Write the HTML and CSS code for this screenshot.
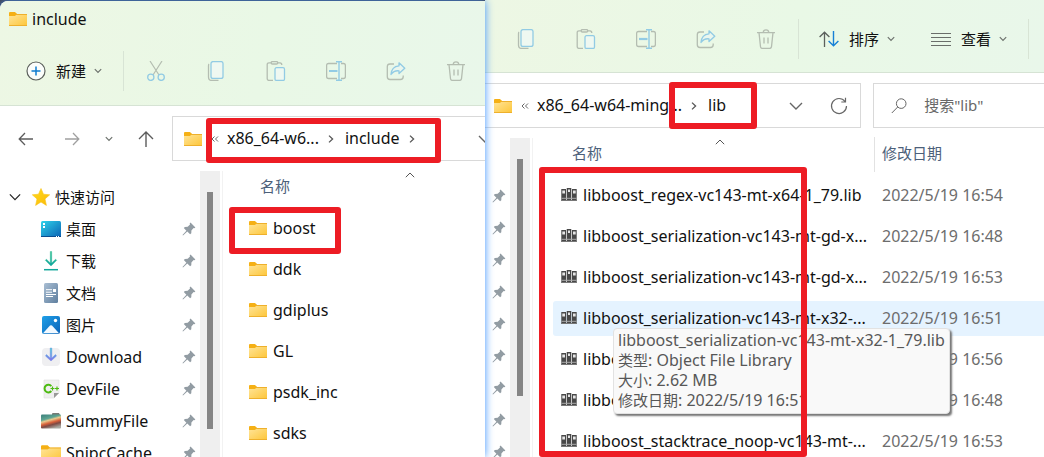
FILE: index.html
```
<!DOCTYPE html>
<html lang="zh-CN">
<head>
<meta charset="utf-8">
<meta name="viewport" content="width=device-width, initial-scale=1">
<title>include</title>
<link rel="stylesheet" href="styles.css">
</head>
<body>
<svg class="sprite" aria-hidden="true">
  <defs>
    <linearGradient id="gFolder" x1="0" y1="0" x2="1" y2="1"><stop offset="0" stop-color="#ffe59a"/><stop offset="1" stop-color="#fdc63a"/></linearGradient>
    <linearGradient id="gDesk" x1="0" y1="0" x2="1" y2="1"><stop offset="0" stop-color="#2fd3ea"/><stop offset="1" stop-color="#0b62b4"/></linearGradient>
    <linearGradient id="gDown" x1="0" y1="0" x2="0" y2="1"><stop offset="0" stop-color="#32c48d"/><stop offset="1" stop-color="#0fa3a0"/></linearGradient>
    <linearGradient id="gDoc" x1="0" y1="0" x2="1" y2="1"><stop offset="0" stop-color="#a9bed3"/><stop offset="1" stop-color="#5f7f9f"/></linearGradient>
    <linearGradient id="gPic" x1="0" y1="0" x2="1" y2="1"><stop offset="0" stop-color="#1fa0e8"/><stop offset="1" stop-color="#0a62b8"/></linearGradient>
    <linearGradient id="gDl" x1="0" y1="0" x2="0" y2="1"><stop offset="0" stop-color="#35d3cf"/><stop offset="1" stop-color="#8a6cf0"/></linearGradient>
    <linearGradient id="gSum" x1=".2" y1="0" x2=".6" y2="1"><stop offset="0" stop-color="#41857f"/><stop offset=".3" stop-color="#5fa592"/><stop offset=".42" stop-color="#e9c98d"/><stop offset=".6" stop-color="#d8603a"/><stop offset=".75" stop-color="#7d4a44"/><stop offset="1" stop-color="#a8a8a0"/></linearGradient>
    <linearGradient id="gStar" x1="0" y1="0" x2="1" y2="1"><stop offset="0" stop-color="#ffdc1a"/><stop offset="1" stop-color="#fbb80a"/></linearGradient>
  </defs>
  <symbol id="folder" viewBox="0 0 18 14"><path d="M0 1Q0 0 1 0H6L7.500 1.500H8V4H0Z" fill="#f5b015"/><path d="M0 4H6L8 2H17.500Q18 2 18 3V13.500H0Z" fill="url(#gFolder)"/><path d="M7 2.500H18M0 13.500H18" stroke="#eeb02c" fill="none"/></symbol>
  <symbol id="down" viewBox="0 0 8 6"><path d="M.8 1.200L4 4.400L7.200 1.200" fill="none" stroke="currentColor" stroke-width="1.200"/></symbol>
  <symbol id="bigdown" viewBox="0 0 14 8"><path d="M1 1L7 7L13 1" fill="none" stroke="currentColor" stroke-width="1.400"/></symbol>
  <symbol id="right" viewBox="0 0 6 8"><path d="M1 .6L4.600 4L1 7.400" fill="none" stroke="currentColor" stroke-width="1.300"/></symbol>
  <symbol id="more" viewBox="0 0 8 6"><path d="M3.500 .5L1 3L3.500 5.500M7 .5L4.500 3L7 5.500" fill="none" stroke="currentColor"/></symbol>
  <symbol id="caret" viewBox="0 0 10 6"><path d="M.8 5.200L5 1L9.200 5.200" fill="none" stroke="currentColor"/></symbol>
  <symbol id="plus" viewBox="0 0 20 20"><circle cx="10" cy="10" r="9" fill="#fbfdfb" stroke="#5c605c" stroke-width="1.200"/><path d="M10 5.500V14.500M5.500 10H14.500" stroke="#0f7bd0" stroke-width="1.500"/></symbol>
  <symbol id="cut" viewBox="0 0 20 20"><path d="M4 0L13 14M16 0L7 14" stroke="#b4bdb1" stroke-width="1.200"/><g fill="none" stroke="#92cbe4" stroke-width="1.300"><circle cx="4.800" cy="16.300" r="3.100"/><circle cx="15.200" cy="16.300" r="3.100"/></g></symbol>
  <symbol id="copy" viewBox="0 0 20 20"><path d="M3 3Q2.500 3.500 2.500 5V16Q2.500 19.500 6 19.500H12.500" fill="none" stroke="#b4bdb1" stroke-width="1.300"/><rect x="5" y=".6" width="12" height="16.800" rx="2" fill="#eff8f1" stroke="#92cbe4" stroke-width="1.300"/></symbol>
  <symbol id="paste" viewBox="0 0 20 20"><g fill="none" stroke="#b4bdb1" stroke-width="1.300"><path d="M7 19.400H3Q1.200 19.400 1.200 17.500V3.500Q1.200 1.800 3 1.800H5M12 1.800H14Q15.800 1.800 15.800 4"/><rect x="5.200" y=".6" width="6.500" height="2.400" rx="1.200"/></g><rect x="9" y="6.700" width="9.500" height="12.700" rx="1.500" fill="#eff8f1" stroke="#92cbe4" stroke-width="1.300"/></symbol>
  <symbol id="rename" viewBox="0 0 20 20"><path d="M11 2.500H2.500Q.6 2.500 .6 4.500V15.500Q.6 17.500 2.500 17.500H11M15 2.500H17.500Q19.400 2.500 19.400 4.500V15.500Q19.400 17.500 17.500 17.500H15" fill="none" stroke="#b4bdb1" stroke-width="1.300"/><path d="M3 10H11.500" stroke="#92cbe4" stroke-width="2.200"/><path d="M13 .8V19.200M10 .7H16M10 19.300H16" stroke="#92cbe4" stroke-width="1.400"/></symbol>
  <symbol id="share" viewBox="0 0 20 20"><path d="M8 3H4Q1.300 3 1.300 5.700V15.800Q1.300 18.500 4 18.500H14.500Q17.200 18.500 17.200 15.800V14.500" fill="none" stroke="#b4bdb1" stroke-width="1.300"/><path d="M13 1.800L18.800 7.200L13 12.600V9.800Q8 9.200 5 13.500Q5.500 5.500 13 4.800Z" fill="#eaf6ee" stroke="#92cbe4" stroke-width="1.300" stroke-linejoin="round"/></symbol>
  <symbol id="trash" viewBox="0 0 20 20"><g fill="none" stroke="#b4bdb1" stroke-width="1.300"><path d="M1 3.600H19M3 3.600L4.500 17.700Q4.700 19.400 6.300 19.400H13.700Q15.300 19.400 15.500 17.700L17 3.600M7.200 3.500Q7.400 .8 10 .8Q12.600 .8 12.800 3.500M8 8.500V14.500M12 8.500V14.500"/></g></symbol>
  <symbol id="sort" viewBox="0 0 20 16"><path d="M5.500 16V1.500M.6 6L5.500 1.200L10.400 6" fill="none" stroke="#5c605c" stroke-width="1.300"/><path d="M14.500 0V14.500M9.600 10L14.500 14.800L19.400 10" fill="none" stroke="#1680d6" stroke-width="1.400"/></symbol>
  <symbol id="lines" viewBox="0 0 20 14"><path d="M0 1.500H20M0 5.500H20M0 9.500H20M0 13.500H20" stroke="#6a6e6a"/></symbol>
  <symbol id="back" viewBox="0 0 16 14"><path d="M15 7H1.500M7 1L1.200 7L7 13" fill="none" stroke="currentColor" stroke-width="1.300"/></symbol>
  <symbol id="fwd" viewBox="0 0 16 14"><path d="M1 7H14.500M9 1L14.800 7L9 13" fill="none" stroke="currentColor" stroke-width="1.300"/></symbol>
  <symbol id="up" viewBox="0 0 16 16"><path d="M8 16V1.500M1 8L8 1L15 8" fill="none" stroke="currentColor" stroke-width="1.400"/></symbol>
  <symbol id="refresh" viewBox="0 0 18 18"><path d="M15 4.500A7.500 7.500 0 1 0 16.500 9M15.500 .8V5H11.300" fill="none" stroke="currentColor" stroke-width="1.200"/></symbol>
  <symbol id="find" viewBox="0 0 16 16"><circle cx="10.200" cy="5.600" r="4.800" fill="none" stroke="currentColor"/><path d="M6.700 9L.8 15" stroke="currentColor"/></symbol>
  <symbol id="pin" viewBox="0 0 14 14"><path d="M8.500 .6L13.400 5.400L12.300 6.300L11.600 6L9.400 8.500L9.300 11.200L8.100 12.200L5.300 9.600L1 13.600L.5 13.100L4.400 8.700L1.800 6L2.900 4.900L5.700 4.800L8 2.400L7.700 1.500Z" fill="#929ca3"/></symbol>
  <symbol id="star" viewBox="0 0 18 18"><path d="M9 .5L11.500 6.200L17.700 6.800L13 10.900L14.400 17.400L9 14L3.600 17.400L5 10.900L.3 6.800L6.500 6.200Z" fill="url(#gStar)" stroke="#f8c21a" stroke-width=".6"/></symbol>
  <symbol id="desk" viewBox="0 0 20 20"><rect y="2" width="20" height="16" rx="1.500" fill="url(#gDesk)"/><path d="M2 4H4V6H2ZM2 7H4V9H2Z" fill="#fff"/><path d="M0 17.500H20" stroke="#0a4d8f"/><path d="M15 17.500H16M17 17.500H18" stroke="#fff"/></symbol>
  <symbol id="dl" viewBox="0 0 20 20"><path d="M9.300 .5H10.700V12L14.600 8.200L15.700 9.300L10 15L4.300 9.300L5.400 8.200L9.300 12Z" fill="url(#gDown)" stroke="#20b495" stroke-width=".4"/><path d="M3 18.700H17" stroke="#12a79b" stroke-width="1.500"/></symbol>
  <symbol id="doc" viewBox="0 0 20 20"><rect x="3" width="14" height="20" rx="1.500" fill="url(#gDoc)"/><path d="M5 6.700H11M5 9.200H11M5 11.500H15M5 13.500H12" stroke="#fff"/><path d="M12 6H15V9H12Z" fill="#fff"/></symbol>
  <symbol id="pic" viewBox="0 0 20 20"><rect x="1" y="1" width="18" height="18" rx="2" fill="url(#gPic)"/><path d="M2 18.300L9 10.600Q10 9.800 11 10.600L18 18.300Z" fill="#f2f9ff"/><circle cx="14.500" cy="5.500" r="1.700" fill="#fff"/></symbol>
  <symbol id="load" viewBox="0 0 20 20"><rect x="1" y="1" width="18" height="18" rx="4" fill="#efeff1"/><path d="M9.200 1H10.800V11L14.500 7.500L15.500 9L10 14L4.500 9L5.500 7.500L9.200 11Z" fill="url(#gDl)" stroke="#7798e6" stroke-width=".5"/></symbol>
  <symbol id="cpp" viewBox="0 0 20 20"><path d="M3 1H18V14L13 19H3Z" fill="#efefef" stroke="#ddd" stroke-width=".6"/><path d="M18 14L13 19V14Z" fill="#999"/><path d="M10.300 7.200A3.800 3.800 0 1 0 10.300 12" fill="none" stroke="#4dbb12" stroke-width="2"/><path d="M9.500 9.500H13.500M11.500 7.500V11.500M14 9.500H18M16 7.500V11.500" stroke="#4dbb12" stroke-width="1.200"/></symbol>
  <symbol id="summy" viewBox="0 0 20 20"><path d="M11 3Q11 2 12 2H18L19 4H11Z" fill="#777b76"/><rect y="3.500" width="20" height="14" rx="1" fill="url(#gSum)"/></symbol>
  <symbol id="lib" viewBox="0 0 16 14"><path d="M.3 1H5V13H.3ZM5.700 0H10.300V13H5.700ZM11 1H15.700V13H11Z" fill="#484848"/><path d="M1.300 2.500H4V5.500H1.300ZM7 1.500H9V4H7ZM12 2.500H14.700V5.500H12Z" fill="#e6e6e6"/><path d="M.5 10.300H15.500" stroke="#aaa"/><path d="M.5 12.500H15.500" stroke="#777"/></symbol>
</svg>

<main class="desktop">
  <section class="window window-left" aria-label="include">
    <header class="chrome">
      <div class="titlebar"><svg class="i-folder"><use href="#folder"/></svg><span>include</span></div>
      <div class="toolbar">
        <button class="cmd cmd-new"><svg class="i20"><use href="#plus"/></svg>新建<svg class="i-down"><use href="#down"/></svg></button>
        <span class="rule"></span>
        <div class="tools">
          <button class="tool" aria-label="剪切"><svg class="i20"><use href="#cut"/></svg></button>
          <button class="tool" aria-label="复制"><svg class="i20"><use href="#copy"/></svg></button>
          <button class="tool" aria-label="粘贴"><svg class="i20"><use href="#paste"/></svg></button>
          <button class="tool" aria-label="重命名"><svg class="i20"><use href="#rename"/></svg></button>
          <button class="tool" aria-label="共享"><svg class="i20"><use href="#share"/></svg></button>
          <button class="tool" aria-label="删除"><svg class="i20"><use href="#trash"/></svg></button>
        </div>
      </div>
    </header>
    <nav class="navrow">
      <button class="nav" aria-label="后退"><svg class="i-arrow"><use href="#back"/></svg></button>
      <button class="nav off" aria-label="前进"><svg class="i-arrow"><use href="#fwd"/></svg></button>
      <button class="nav nav-small" aria-label="最近"><svg class="i-down"><use href="#down"/></svg></button>
      <button class="nav" aria-label="上一级"><svg class="i16"><use href="#up"/></svg></button>
      <div class="address">
        <svg class="i-folder"><use href="#folder"/></svg><svg class="i-more"><use href="#more"/></svg>
        <a href="#">x86_64-w6...</a><svg class="i-right"><use href="#right"/></svg>
        <a href="#">include</a><svg class="i-right"><use href="#right"/></svg>
        <button class="drop" aria-label="历史"><svg class="i-bigdown"><use href="#bigdown"/></svg></button>
      </div>
    </nav>
    <div class="content">
      <aside class="side">
        <div class="item root"><svg class="i-bigdown open"><use href="#bigdown"/></svg><svg class="i18"><use href="#star"/></svg><span class="zh">快速访问</span></div>
        <div class="item"><svg class="i20"><use href="#desk"/></svg><span class="zh">桌面</span><svg class="pin"><use href="#pin"/></svg></div>
        <div class="item"><svg class="i20"><use href="#dl"/></svg><span class="zh">下载</span><svg class="pin"><use href="#pin"/></svg></div>
        <div class="item"><svg class="i20"><use href="#doc"/></svg><span class="zh">文档</span><svg class="pin"><use href="#pin"/></svg></div>
        <div class="item"><svg class="i20"><use href="#pic"/></svg><span class="zh">图片</span><svg class="pin"><use href="#pin"/></svg></div>
        <div class="item"><svg class="i20"><use href="#load"/></svg><span>Download</span><svg class="pin"><use href="#pin"/></svg></div>
        <div class="item"><svg class="i20"><use href="#cpp"/></svg><span>DevFile</span><svg class="pin"><use href="#pin"/></svg></div>
        <div class="item"><svg class="i20"><use href="#summy"/></svg><span>SummyFile</span><svg class="pin"><use href="#pin"/></svg></div>
        <div class="item"><svg class="i20"><use href="#folder"/></svg><span>SnipcCache</span><svg class="pin"><use href="#pin"/></svg></div>
      </aside>
      <div class="scroll"><div class="thumb"></div></div>
      <div class="list">
        <svg class="i-caret"><use href="#caret"/></svg>
        <table class="files">
          <thead><tr><th>名称</th></tr></thead>
          <tbody>
            <tr><td><svg class="i-folder"><use href="#folder"/></svg>boost</td></tr>
            <tr><td><svg class="i-folder"><use href="#folder"/></svg>ddk</td></tr>
            <tr><td><svg class="i-folder"><use href="#folder"/></svg>gdiplus</td></tr>
            <tr><td><svg class="i-folder"><use href="#folder"/></svg>GL</td></tr>
            <tr><td><svg class="i-folder"><use href="#folder"/></svg>psdk_inc</td></tr>
            <tr><td><svg class="i-folder"><use href="#folder"/></svg>sdks</td></tr>
          </tbody>
        </table>
      </div>
    </div>
    <div class="mark mark-path"></div>
    <div class="mark mark-boost"></div>
  </section>

  <section class="window window-right" aria-label="lib">
    <header class="chrome">
      <div class="toolbar">
        <div class="tools">
          <button class="tool" aria-label="复制"><svg class="i20"><use href="#copy"/></svg></button>
          <button class="tool" aria-label="粘贴"><svg class="i20"><use href="#paste"/></svg></button>
          <button class="tool" aria-label="重命名"><svg class="i20"><use href="#rename"/></svg></button>
          <button class="tool" aria-label="共享"><svg class="i20"><use href="#share"/></svg></button>
          <button class="tool" aria-label="删除"><svg class="i20"><use href="#trash"/></svg></button>
        </div>
        <span class="rule"></span>
        <button class="cmd"><svg class="i-sort"><use href="#sort"/></svg>排序<svg class="i-down"><use href="#down"/></svg></button>
        <button class="cmd"><svg class="i-lines"><use href="#lines"/></svg>查看<svg class="i-down"><use href="#down"/></svg></button>
        <span class="rule"></span>
      </div>
    </header>
    <nav class="navrow">
      <div class="address">
        <svg class="i-folder"><use href="#folder"/></svg><svg class="i-more"><use href="#more"/></svg>
        <a href="#">x86_64-w64-ming...</a><svg class="i-right"><use href="#right"/></svg>
        <a href="#">lib</a>
        <button class="drop" aria-label="历史"><svg class="i-bigdown"><use href="#bigdown"/></svg></button>
        <button class="drop" aria-label="刷新"><svg class="i18"><use href="#refresh"/></svg></button>
      </div>
      <label class="search"><svg class="i16"><use href="#find"/></svg><input type="text" aria-label="搜索" placeholder='搜索"lib"'></label>
    </nav>
    <div class="content">
      <aside class="side">
        <div class="item"><svg class="pin"><use href="#pin"/></svg></div>
        <div class="item"><svg class="pin"><use href="#pin"/></svg></div>
        <div class="item"><svg class="pin"><use href="#pin"/></svg></div>
        <div class="item"><svg class="pin"><use href="#pin"/></svg></div>
        <div class="item"><svg class="pin"><use href="#pin"/></svg></div>
        <div class="item"><svg class="pin"><use href="#pin"/></svg></div>
        <div class="item"><svg class="pin"><use href="#pin"/></svg></div>
        <div class="item"><svg class="pin"><use href="#pin"/></svg></div>
        <div class="item"><svg class="pin"><use href="#pin"/></svg></div>
      </aside>
      <div class="scroll"><div class="thumb"></div></div>
      <div class="list">
        <svg class="i-caret"><use href="#caret"/></svg>
        <table class="files">
          <colgroup><col class="col-name"><col></colgroup>
          <thead><tr><th>名称</th><th>修改日期</th></tr></thead>
          <tbody>
            <tr><td><svg class="i-lib"><use href="#lib"/></svg>libboost_regex-vc143-mt-x64-1_79.lib</td><td>2022/5/19 16:54</td></tr>
            <tr><td><svg class="i-lib"><use href="#lib"/></svg>libboost_serialization-vc143-mt-gd-x...</td><td>2022/5/19 16:48</td></tr>
            <tr><td><svg class="i-lib"><use href="#lib"/></svg>libboost_serialization-vc143-mt-gd-x...</td><td>2022/5/19 16:53</td></tr>
            <tr class="hover"><td><svg class="i-lib"><use href="#lib"/></svg>libboost_serialization-vc143-mt-x32-...</td><td>2022/5/19 16:51</td></tr>
            <tr><td><svg class="i-lib"><use href="#lib"/></svg>libbo</td><td>2022/5/19 16:56</td></tr>
            <tr><td><svg class="i-lib"><use href="#lib"/></svg>libbo</td><td>2022/5/19 16:48</td></tr>
            <tr><td><svg class="i-lib"><use href="#lib"/></svg>libboost_stacktrace_noop-vc143-mt-...</td><td>2022/5/19 16:53</td></tr>
          </tbody>
        </table>
      </div>
    </div>
    <div class="tip" role="tooltip">
      <div>libboost_serialization-vc143-mt-x32-1_79.lib</div>
      <div><span class="zh">类型</span>: Object File Library</div>
      <div><span class="zh">大小</span>: 2.62 MB</div>
      <div><span class="zh">修改日期</span>: 2022/5/19 16:51</div>
    </div>
    <div class="mark mark-lib"></div>
    <div class="mark mark-files"></div>
  </section>
</main>
</body>
</html>
```

FILE: styles.css
```
* { box-sizing: border-box; }
body {
  margin: 0;
  background: #433f45;
  color: #111;
  font: 16px/20px "Noto Sans", "Noto Sans CJK SC", sans-serif;
}
button {
  border: 0;
  padding: 0;
  background: none;
  color: inherit;
  font: inherit;
}
a { color: inherit; text-decoration: none; }
svg { display: block; flex: none; }
.sprite { position: absolute; width: 0; height: 0; }
.zh { font-size: 15px; }

.i16 { width: 16px; height: 16px; }
.i18 { width: 18px; height: 18px; }
.i20 { width: 20px; height: 20px; }
.i-folder { width: 18px; height: 14px; }
.i-down { width: 8px; height: 6px; color: #6d726d; }
.i-bigdown { width: 14px; height: 8px; }
.i-right { width: 6px; height: 8px; color: #555; }
.i-more { width: 8px; height: 6px; color: #666; }
.i-arrow { width: 16px; height: 14px; }
.i-sort { width: 20px; height: 16px; }
.i-lines { width: 20px; height: 14px; }
.i-lib { width: 16px; height: 14px; }
.pin { width: 14px; height: 14px; margin-left: auto; }

.desktop {
  display: grid;
  grid-template-columns: 485fr 559fr;
  height: 100vh;
  overflow: hidden;
}
.window {
  position: relative;
  display: flex;
  flex-direction: column;
  min-width: 0;
  min-height: 0;
  background: #fff;
}
.window-left {
  z-index: 1;
  margin-top: 1px;
  border-top-left-radius: 8px;
  box-shadow: 0 0 8px #3b92ff;
}
.chrome {
  overflow: hidden;
  border-bottom: 1px solid #d6e3d4;
  background: linear-gradient(100deg, #edf7e4, #e9f8e6 55%, #e9f7ea);
}
.window-left .chrome { border-top-left-radius: 8px; }
.titlebar {
  display: flex;
  align-items: center;
  gap: 5px;
  height: 36px;
  padding-left: 9px;
}
.toolbar { display: flex; align-items: center; height: 67px; }
.window-left .toolbar { height: 68px; }
.window-right .toolbar { height: 72px; padding: 6px 0 0 21px; }
.cmd {
  display: flex;
  flex: none;
  align-items: center;
  gap: 10px;
  height: 40px;
  font-size: 15px;
  white-space: nowrap;
}
.cmd .i-down { margin-left: -2px; }
.cmd-new { padding-left: 26px; }
.rule { flex: none; width: 1px; height: 40px; background: #d8e4d5; }
.cmd-new + .rule { margin-left: 21px; }
.tools { display: flex; flex: none; gap: 20px; padding: 0 12px; }
.window-right .tools { padding-left: 0; }
.tool { display: grid; flex: none; place-items: center; width: 40px; height: 40px; }
.window-right .cmd { margin-left: 20px; }
.window-right .cmd + .cmd { margin-left: 36px; }
.window-right .cmd + .rule { margin-left: 21px; }

.navrow { display: flex; align-items: center; gap: 12px; padding-top: 10px; }
.window-left .navrow { gap: 0; padding-left: 3px; }
.nav { display: grid; place-items: center; width: 46px; height: 44px; color: #5c5c5c; }
.nav-small { width: 28px; }
.off { color: #a0a0a0; }
.address {
  display: flex;
  flex: 1;
  align-items: center;
  min-width: 0;
  height: 45px;
  border: 1px solid #d9d9d9;
  padding-left: 9px;
  overflow: hidden;
  white-space: nowrap;
}
.window-left .address { border-right: 0; margin-left: 3px; padding-left: 11px; }
.address a { padding-bottom: 1px; }
.address .i-more { margin: 0 8px 0 9px; }
.address .i-right { margin: 0 11px 0 9px; }
.drop { display: grid; flex: none; place-items: center; width: 43px; height: 43px; color: #666; }
.address a + .drop, .address .i-right + .drop { margin-left: auto; }
.window-left .drop { width: 14px; margin-right: -7px; }
.window-right .address { flex: none; width: 67.3%; border-left: 0; }
.search {
  display: flex;
  flex: 1;
  align-items: center;
  gap: 17px;
  min-width: 0;
  height: 45px;
  border: 1px solid #d9d9d9;
  border-right: 0;
  padding-left: 17px;
  color: #666;
}
.search input { width: 100%; min-width: 0; border: 0; padding: 0 0 2px; outline: 0; background: none; font: inherit; font-size: 15px; }
.search input::placeholder { color: #686868; opacity: 1; }

.content { display: flex; flex: 1; min-height: 0; padding-top: 10px; overflow: hidden; }
.side { flex: none; width: 200px; padding-top: 10px; }
.window-right .side { width: 25px; padding-top: 42px; }
.item { display: flex; align-items: center; gap: 5px; height: 32px; padding: 0 4px 0 41px; }
.window-right .item { padding: 0 4px 0 0; }
.root { padding-left: 9px; }
.open { width: 12px; margin-right: 6px; color: #222; }
.scroll { flex: none; width: 20px; padding: 21px 7px 0; background: #efefef; }
.thumb { width: 6px; height: 237px; background: #858585; }
.list { position: relative; flex: 1; min-width: 0; margin-left: 2px; border-left: 1px solid #f2f2f2; padding-left: 18px; }
.window-right .list { padding-left: 20px; }
.i-caret { position: absolute; top: 1px; left: 182px; width: 10px; height: 6px; color: #555; }
.files { width: 100%; margin-top: -7px; border-spacing: 0 6px; table-layout: fixed; }
.col-name { width: 321px; }
.files th { height: 35px; padding: 0 0 3px 19px; color: #4c607a; font-size: 15px; font-weight: 400; text-align: left; }
.files th + th { border-left: 1px solid #e2e2e2; padding-left: 7px; }
.files td { height: 35px; padding: 0 0 1px 8px; overflow: hidden; white-space: nowrap; }
.files td + td { color: #6d6d6d; }
.files td svg { display: inline-block; margin-right: 6px; vertical-align: -1px; }
.hover td { background: #e5f3ff; }
.hover td:first-child { border-radius: 3px 0 0 3px; }

.tip {
  position: absolute;
  top: 328px;
  left: 128px;
  border: 1px solid #e2e2e2;
  border-radius: 4px;
  padding: 1px 4px 3px;
  background: #f9f9f9;
  box-shadow: 2px 2px 2px #777;
  color: #575757;
  white-space: nowrap;
}
.mark { position: absolute; border: 6px solid #ed1c24; border-radius: 3px; pointer-events: none; }
.mark-path { top: 117px; left: 206px; width: 235px; height: 45px; }
.mark-boost { top: 206px; left: 229px; width: 112px; height: 47px; }
.mark-lib { top: 82px; left: 184px; width: 88px; height: 47px; }
.mark-files { top: 167px; left: 54px; width: 268px; height: 290px; }
```
